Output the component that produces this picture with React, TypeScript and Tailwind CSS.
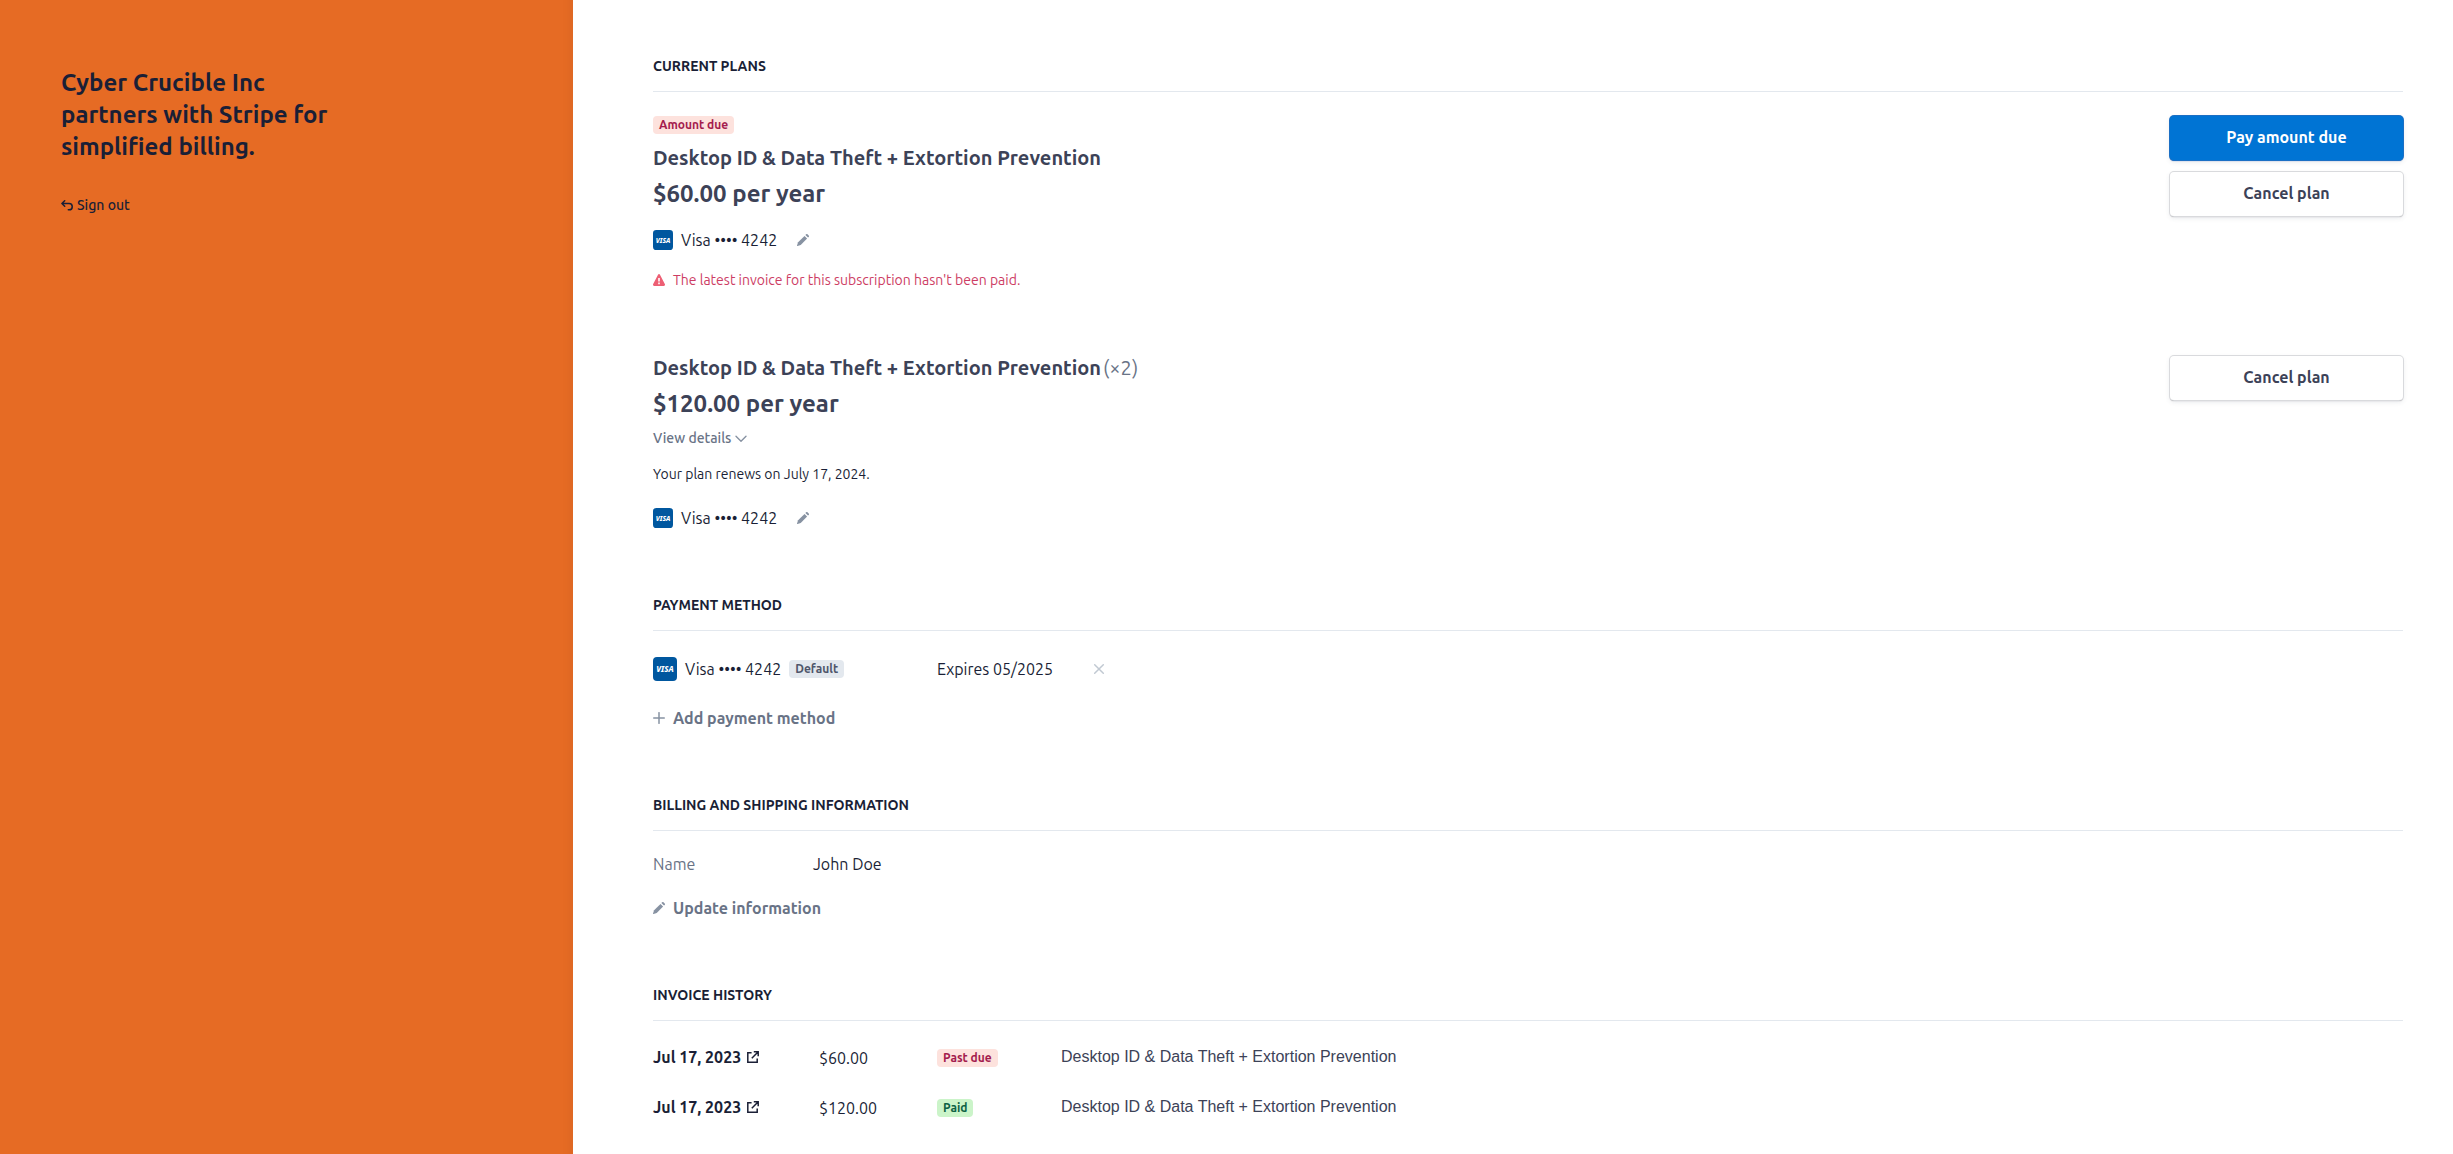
import type { ReactNode } from 'react'
import { clsx } from 'clsx'

const plans = [
  {
    id: 'sub_1',
    name: 'Desktop ID & Data Theft + Extortion Prevention',
    price: '$60.00 per year',
    due: true,
  },
  {
    id: 'sub_2',
    name: 'Desktop ID & Data Theft + Extortion Prevention',
    price: '$120.00 per year',
    quantity: 2,
    renews: 'July 17, 2024',
  },
]

const invoices = [
  { id: 'in_1', date: 'Jul 17, 2023', amount: '$60.00', status: 'Past due', description: 'Desktop ID & Data Theft + Extortion Prevention' },
  { id: 'in_2', date: 'Jul 17, 2023', amount: '$120.00', status: 'Paid', description: 'Desktop ID & Data Theft + Extortion Prevention' },
]

function PencilIcon() {
  return (
    <svg viewBox="0 0 12 12" className="size-3 shrink-0 fill-[#8792a2]" aria-hidden="true">
      <path d="M7.5 1.9 10.1 4.5 3.7 10.9 0.5 12a.4.4 0 0 1-.5-.5L1.1 8.3z" />
      <path d="m8.4 1 .7-.7a1 1 0 0 1 1.4 0l1.2 1.2a1 1 0 0 1 0 1.4l-.7.7z" />
    </svg>
  )
}

function WarningIcon() {
  return (
    <svg viewBox="0 0 12 12" className="size-3 shrink-0" aria-hidden="true">
      <path d="M5 .7a1.15 1.15 0 0 1 2 0l4.8 9.3a1.3 1.3 0 0 1-1.1 2H1.3a1.3 1.3 0 0 1-1.1-2z" fill="#ed5f74" />
      <path d="M5.2 4h1.6v3.6H5.2zM5.2 8.6h1.6v1.6H5.2z" fill="#fff" />
    </svg>
  )
}

function ReturnIcon() {
  return (
    <svg viewBox="0 0 12 12" className="size-3 shrink-0 fill-none stroke-[#1a1f36]" strokeWidth="1.5" strokeLinecap="round" strokeLinejoin="round" aria-hidden="true">
      <path d="M3.7 1.8.9 4.5l2.8 2.7M1.2 4.5h6.9a3.1 3.1 0 0 1 0 6.3H7.3" />
    </svg>
  )
}

function ChevronIcon() {
  return (
    <svg viewBox="0 0 12 12" className="size-3 shrink-0 fill-none stroke-[#8792a2]" strokeWidth="1.4" strokeLinecap="round" strokeLinejoin="round" aria-hidden="true">
      <path d="M1 4.2 6 9.2l5-5" />
    </svg>
  )
}

function PlusIcon() {
  return (
    <svg viewBox="0 0 12 12" className="size-3 shrink-0 fill-none stroke-[#8792a2]" strokeWidth="1.5" strokeLinecap="round" aria-hidden="true">
      <path d="M6 .7v10.6M.7 6h10.6" />
    </svg>
  )
}

function CloseIcon() {
  return (
    <svg viewBox="0 0 12 12" className="size-3 shrink-0 fill-none stroke-[#c1c9d2]" strokeWidth="1.5" strokeLinecap="round" aria-hidden="true">
      <path d="m1.7 1.7 8.6 8.6M10.3 1.7l-8.6 8.6" />
    </svg>
  )
}

function ExternalIcon() {
  return (
    <svg viewBox="0 0 12 12" className="size-3 shrink-0 fill-none stroke-[#1a1f36]" strokeWidth="1.5" aria-hidden="true">
      <path d="M4.6 1.8H.8v9.4h9.4V7.4M6.8.8h4.4v4.4M11 1 4.8 7.2" />
    </svg>
  )
}

function VisaLogo({ className }: { className: string }) {
  return (
    <svg viewBox="0 0 24 24" className={clsx('shrink-0', className)} aria-hidden="true">
      <rect width="24" height="24" rx="4" fill="#00579f" />
      <text x="12" y="15" textAnchor="middle" fontSize="8" fontWeight="800" fontStyle="italic" fontFamily="Noto Sans" fill="#fff">
        VISA
      </text>
    </svg>
  )
}

const badgeColors = {
  red: 'bg-[#fde2dd] text-[#a41c4e]',
  green: 'bg-[#cbf4c9] text-[#0e6245]',
  gray: 'bg-[#e3e8ee] text-[#4f566b]',
}

function Badge({ color, children }: { color: keyof typeof badgeColors; children: ReactNode }) {
  return (
    <span className={clsx('block w-fit rounded-sm px-1.5 text-xs leading-[18px] font-semibold', badgeColors[color])}>
      {children}
    </span>
  )
}

function Section({ title, children }: { title: string; children: ReactNode }) {
  return (
    <section>
      <h2 className="border-b border-[#e3e8ee] pb-[15px] text-sm font-semibold uppercase">{title}</h2>
      {children}
    </section>
  )
}

function PlanButton({ primary, children }: { primary?: boolean; children: ReactNode }) {
  return (
    <button
      type="button"
      className={clsx(
        'h-11 w-full rounded-sm pb-[3px] font-semibold',
        primary
          ? 'bg-[#0074d4] text-white shadow-[0_0_0_1px_#1b6fc4,0_1px_1px_#3c62a8,0_2px_5px_rgba(60,66,87,0.12)]'
          : 'bg-white text-[#3c4257] shadow-[0_0_0_1px_#d9dadd,0_1px_1px_#9a9ba0,0_2px_5px_rgba(60,66,87,0.12)]'
      )}
    >
      {children}
    </button>
  )
}

function PlanCard({ plan }: { plan: (typeof plans)[number] }) {
  return (
    <div className="flex items-start justify-between gap-8">
      <div>
        {plan.due && (
          <div className="mb-3">
            <Badge color="red">Amount due</Badge>
          </div>
        )}
        <h3 className="text-xl leading-6 font-semibold text-[#3c4257]">
          {plan.name}
          {plan.quantity && <span className="ml-0.5 font-normal text-[#697386]">(×{plan.quantity})</span>}
        </h3>
        <p className="mt-2 text-2xl font-bold text-[#3c4257]">{plan.price}</p>
        {plan.renews && (
          <>
            <button type="button" className="mt-2 flex items-center gap-1 text-sm font-medium text-[#697386]">
              View details
              <ChevronIcon />
            </button>
            <p className="mt-4 text-sm">Your plan renews on {plan.renews}.</p>
          </>
        )}
        <div className={clsx('flex items-center', plan.renews ? 'mt-[22px]' : 'mt-[18px]')}>
          <VisaLogo className="size-5" />
          <span className="ml-2">Visa •••• 4242</span>
          <button type="button" className="ml-5" aria-label="Change payment method">
            <PencilIcon />
          </button>
        </div>
        {plan.due && (
          <p className="mt-[18px] flex items-center gap-2 text-sm text-[#cd3d64]">
            <WarningIcon />
            The latest invoice for this subscription hasn't been paid.
          </p>
        )}
      </div>
      <div className="flex w-[233px] shrink-0 flex-col gap-3">
        {plan.due && <PlanButton primary>Pay amount due</PlanButton>}
        <PlanButton>Cancel plan</PlanButton>
      </div>
    </div>
  )
}

export default function App() {
  return (
    <div className="grid min-h-screen grid-cols-[573fr_1880fr] bg-white font-[Ubuntu,'Noto_Sans',sans-serif] text-base text-[#1a1f36]">
      <aside className="bg-[#e66b24] px-[61px] pt-[67px] shadow-[inset_-14px_0_12px_-12px_rgba(0,0,0,0.05)]">
        <h1 className="max-w-[270px] text-2xl font-semibold">Cyber Crucible Inc partners with Stripe for simplified billing.</h1>
        <a href="#" className="mt-8 flex w-fit items-center gap-1 text-sm font-medium">
          <ReturnIcon />
          Sign out
        </a>
      </aside>

      <main className="flex flex-col gap-[65px] pt-14 pr-[50px] pb-8 pl-20">
        <Section title="Current plans">
          <div className="mt-6 flex flex-col gap-[66px]">
            {plans.map((plan) => (
              <PlanCard key={plan.id} plan={plan} />
            ))}
          </div>
        </Section>

        <Section title="Payment method">
          <div className="mt-[26px] flex items-center">
            <div className="flex w-[284px] items-center gap-2">
              <VisaLogo className="size-6" />
              <span>Visa •••• 4242</span>
              <Badge color="gray">Default</Badge>
            </div>
            <span className="w-[156px]">Expires 05/2025</span>
            <button type="button" aria-label="Remove payment method">
              <CloseIcon />
            </button>
          </div>
          <button type="button" className="mt-[25px] flex items-center gap-2 font-semibold text-[#697386]">
            <PlusIcon />
            Add payment method
          </button>
        </Section>

        <Section title="Billing and shipping information">
          <dl className="mt-[21px] flex">
            <dt className="w-40 text-[#697386]">Name</dt>
            <dd>John Doe</dd>
          </dl>
          <button type="button" className="mt-5 flex items-center gap-2 font-semibold text-[#697386]">
            <PencilIcon />
            Update information
          </button>
        </Section>

        <Section title="Invoice history">
          <table className="mt-3 w-full table-fixed">
            <tbody>
              {invoices.map((invoice) => (
                <tr key={invoice.id} className="h-[50px]">
                  <td className="w-[166px] pb-0.5">
                    <a href="#" className="flex items-center gap-1.5 font-semibold">
                      {invoice.date}
                      <ExternalIcon />
                    </a>
                  </td>
                  <td className="w-[118px]">{invoice.amount}</td>
                  <td className="w-[124px]">
                    <Badge color={invoice.status === 'Paid' ? 'green' : 'red'}>{invoice.status}</Badge>
                  </td>
                  <td className="pb-0.5 font-['Liberation_Sans',Arial,sans-serif] text-[#3c4257]">{invoice.description}</td>
                </tr>
              ))}
            </tbody>
          </table>
        </Section>
      </main>
    </div>
  )
}
